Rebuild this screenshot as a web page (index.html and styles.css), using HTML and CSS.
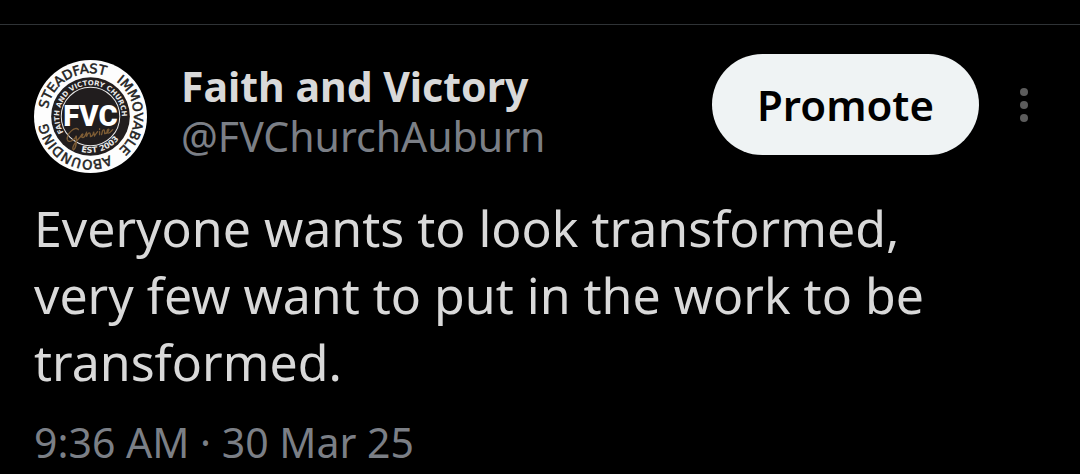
FILE: index.html
```html
<!DOCTYPE html>
<html lang="en">
<head>
    <meta charset="UTF-8">
    <meta name="viewport" content="width=device-width, initial-scale=1.0">
    <title>Faith and Victory</title>
    <link rel="stylesheet" href="styles.css">
</head>
<body>
    <article class="post">
        <header class="post-header">
            <svg class="avatar" viewBox="-56 -56 112 112" role="img" aria-label="Faith and Victory logo">
                <defs>
                    <path id="outer-ring" d="M0 43A43 43 0 0 1 0 -43A43 43 0 0 1 0 43A43 43 0 0 1 0 -43"/>
                    <path id="inner-top" d="M0 31A31 31 0 0 1 0 -31A31 31 0 0 1 0 31"/>
                    <path id="inner-bottom" d="M-36 0A36 36 0 0 0 36 0"/>
                </defs>
                <circle r="56" fill="#fdfdfd"/>
                <circle r="39" fill="#211d1e"/>
                <circle r="29" fill="none" stroke="#e8e8e8" stroke-width="1"/>
                <g class="ring-text">
                    <text><textPath href="#outer-ring" startOffset="75">STEADFAST</textPath></text>
                    <text><textPath href="#outer-ring" startOffset="162">IMMOVABLE</textPath></text>
                    <text><textPath href="#outer-ring" startOffset="250">ABOUNDING</textPath></text>
                </g>
                <g class="inner-text">
                    <text><textPath href="#inner-top" startOffset="32">FAITH AND VICTORY CHURCH</textPath></text>
                    <text class="est"><textPath href="#inner-bottom" startOffset="47">EST 2003</textPath></text>
                </g>
                <text class="logo-letters" x="0" y="9">FVC</text>
                <path d="M-12 13C-15 9 -24 17 -23 23C-22 27 -15 23 -14 19C-14 26 -14 32 -17 33C-19 31 -15 25 -10 20C-8 16 -6 17 -9 20C-6 23 -5 17 -4 16L-4 20C-2 15 0 15 0 20C2 20 3 17 3 15L4 19L7 15M9 15L9 18M9 12L9 13M11 18L12 14C14 12 14 15 14 17C17 17 20 11 17 13C15 17 18 18 22 13" fill="none" stroke="#7d5c35" stroke-width="1.3" stroke-linecap="round"/>
            </svg>
            <div class="author">
                <div class="name">Faith and Victory</div>
                <div class="handle">@FVChurchAuburn</div>
            </div>
            <div class="actions">
                <button class="promote" type="button">Promote</button>
                <button class="more" type="button" aria-label="More">
                    <svg width="10" height="36" viewBox="0 0 10 36" fill="#5c5c5c">
                        <circle cx="5" cy="5" r="4"/>
                        <circle cx="5" cy="18" r="4"/>
                        <circle cx="5" cy="31" r="4"/>
                    </svg>
                </button>
            </div>
        </header>
        <p class="post-text">Everyone wants to look transformed, very few want to put in the work to be transformed.</p>
        <time class="post-time" datetime="2025-03-30T09:36">9:36 AM · 30 Mar 25</time>
    </article>
</body>
</html>
```
FILE: styles.css
```css
body {
    margin: 0;
    padding-top: 24px;
    background-color: #000;
    color: #d9d9d9;
    font-family: "Noto Sans", sans-serif;
}

.post {
    border-top: 1px solid #2f3336;
    padding: 29px 51px 0 34px;
}

.post-header {
    display: flex;
    align-items: flex-start;
}

.avatar {
    width: 113px;
    height: 113px;
    margin-top: 6px;
    flex-shrink: 0;
}

.author {
    flex: 1;
    margin: 7px 0 0 34px;
    font-size: 41px;
    line-height: 50px;
}

.name {
    font-weight: 700;
}

.handle,
.post-time {
    color: #7b7f86;
}

.actions {
    display: flex;
    align-items: center;
}

.promote {
    padding: 24px 45px;
    border: none;
    border-radius: 52px;
    background-color: #eff3f4;
    color: #000;
    font-family: inherit;
    font-size: 42px;
    font-weight: 600;
    line-height: 53px;
}

.more {
    display: flex;
    margin-left: 40px;
    padding: 0;
    border: none;
    background: none;
}

.post-text {
    margin: 22px 0 21px;
    padding-right: 40px;
    font-size: 50px;
    line-height: 67px;
}

.post-time {
    display: block;
    font-size: 41px;
    line-height: 50px;
}

.ring-text {
    fill: #222;
    stroke: #222;
    stroke-width: 0.5px;
    font-family: "DejaVu Sans", sans-serif;
    font-size: 13px;
}

.inner-text {
    fill: #e8e8e8;
    font-family: "DejaVu Sans", sans-serif;
    font-size: 7px;
    font-weight: bold;
}

.est {
    font-size: 8px;
}

.logo-letters {
    fill: #fff;
    font-family: Roboto, sans-serif;
    font-size: 29px;
    font-weight: 900;
    text-anchor: middle;
}
```
